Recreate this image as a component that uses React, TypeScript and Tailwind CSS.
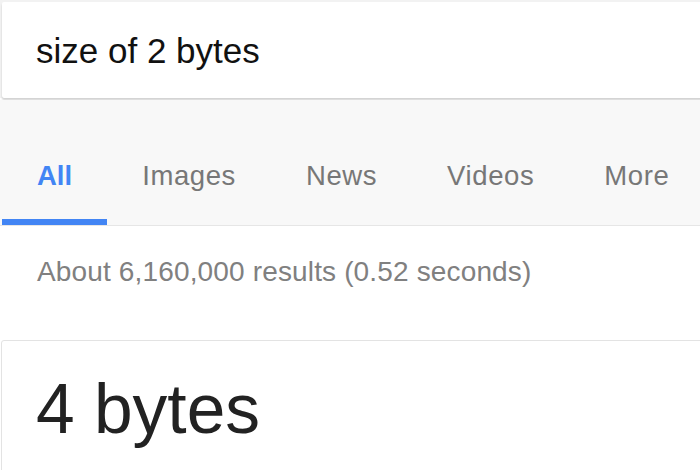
import React from 'react';

const tabs = ['All', 'Images', 'News', 'Videos', 'More'];

export default function App() {
  return (
    <div className="w-[700px] h-[470px] overflow-hidden bg-white font-['Liberation_Sans',Arial,sans-serif]">
      <div className="bg-[#f2f2f2] pl-[2px] pt-[2px]">
        <div className="h-[96px] w-[720px] bg-white rounded-[2px] shadow-[0_2px_2px_rgba(0,0,0,0.18)] flex items-center pl-[34px]">
          <span className="text-[35px] leading-none text-[#111]">size of 2 bytes</span>
        </div>
      </div>

      <div className="mt-[2px] h-[126px] bg-[#f8f8f8] border-b border-[#e6e6e6] flex items-end pl-[2px]">
        {tabs.map((t, i) => (
          <div key={t} className="flex flex-col">
            <div
              className={
                i === 0
                  ? 'px-[35px] pb-[30px] text-[27.5px] leading-none font-bold text-[#4285f4]'
                  : 'px-[35px] pb-[30px] text-[27.5px] leading-none tracking-[0.6px] text-[#777]'
              }
            >
              {t}
            </div>
            <div className={i === 0 ? 'h-[6px] bg-[#4285f4]' : 'h-[6px]'}></div>
          </div>
        ))}
      </div>

      <div className="pl-[37px] pt-[32px] text-[28px] text-[#808080] leading-none tracking-[0.15px]">About 6,160,000 results (0.52 seconds)</div>

      <div className="mt-[54px] ml-[1px] w-[720px] h-[200px] border border-[#e3e3e3] rounded-[3px] pl-[34px] pt-[34px]">
        <div className="text-[69.5px] leading-none text-[#222]">4 bytes</div>
      </div>
    </div>
  );
}
